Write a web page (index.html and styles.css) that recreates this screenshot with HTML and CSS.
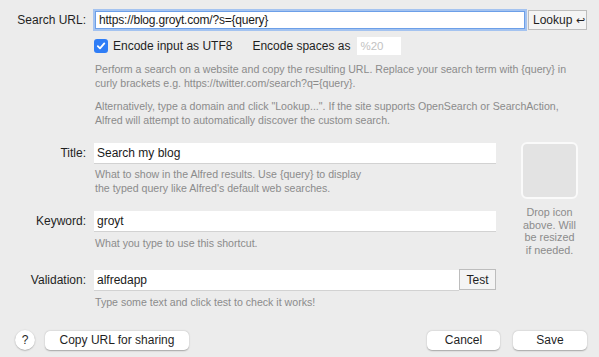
FILE: index.html
```html
<!DOCTYPE html>
<html>
<head>
    <title>Custom Search</title>
    <link rel="stylesheet" href="styles.css">
</head>
<body>
    <div class="dialog">
        <div class="row url-row">
            <label class="label" for="search-url">Search URL:</label>
            <input type="text" id="search-url" class="url-input" value="https://blog.groyt.com/?s={query}">
            <button class="lookup-btn">Lookup <span class="return">&#8617;</span></button>
        </div>

        <div class="check-row">
            <span class="checkbox">
                <svg width="10" height="10" viewBox="0 0 10 10"><path d="M1.8 5.2 L4 7.4 L8.3 2.4" fill="none" stroke="#fff" stroke-width="1.8" stroke-linecap="round" stroke-linejoin="round"/></svg>
            </span>
            <span class="check-label">Encode input as UTF8</span>
            <span class="spaces-label">Encode spaces as</span>
            <input type="text" class="spaces-input" placeholder="%20">
        </div>

        <p class="help first">Perform a search on a website and copy the resulting URL. Replace your search term with {query} in<br>curly brackets e.g. https://twitter.com/search?q={query}.</p>
        <p class="help second">Alternatively, type a domain and click "Lookup...". If the site supports OpenSearch or SearchAction,<br>Alfred will attempt to automatically discover the custom search.</p>

        <div class="main">
            <div class="fields">
                <div class="row field-row title-row">
                    <label class="label">Title:</label>
                    <input type="text" class="field" value="Search my blog">
                </div>
                <p class="help field-help">What to show in the Alfred results. Use {query} to display<br>the typed query like Alfred's default web searches.</p>

                <div class="row field-row keyword-row">
                    <label class="label">Keyword:</label>
                    <input type="text" class="field" value="groyt">
                </div>
                <p class="help field-help">What you type to use this shortcut.</p>

                <div class="row field-row validation-row">
                    <label class="label">Validation:</label>
                    <input type="text" class="field" value="alfredapp">
                    <button class="test-btn">Test</button>
                </div>
                <p class="help field-help">Type some text and click test to check it works!</p>
            </div>

            <div class="icon-col">
                <div class="icon-well"></div>
                <p class="drop-text">Drop icon<br>above. Will<br>be resized<br>if needed.</p>
            </div>
        </div>

        <div class="footer">
            <button class="help-btn">?</button>
            <button class="push-btn copy-btn">Copy URL for sharing</button>
            <div class="spacer"></div>
            <button class="push-btn cancel-btn">Cancel</button>
            <button class="push-btn save-btn">Save</button>
        </div>
    </div>
</body>
</html>
```

FILE: styles.css
```css
body {
    margin: 0;
    width: 599px;
    height: 357px;
    overflow: hidden;
    background-color: #ececec;
    font-family: "Liberation Sans", Arial, sans-serif;
    font-size: 12px;
    color: #1f1f1f;
}
.dialog {
    padding: 9px 12px 0 0;
}
.row {
    display: flex;
    align-items: center;
}
.label {
    width: 86px;
    flex-shrink: 0;
    text-align: right;
    margin-right: 8px;
}
input {
    font-family: inherit;
    font-size: 12px;
    color: #1a1a1a;
    outline: none;
}
button {
    font-family: inherit;
    font-size: 12px;
    color: #1f1f1f;
    cursor: pointer;
}

/* search url */
.url-row {
    height: 21px;
}
.url-row .label {
    margin-right: 9px;
}
.url-input {
    flex: 1;
    height: 18px;
    box-sizing: border-box;
    padding: 0 3px;
    border: 1px solid #6c9fe8;
    box-shadow: 0 0 0 2px #a4c3f0;
    background: #fff;
    letter-spacing: -0.2px;
}
.lookup-btn {
    margin-left: 3px;
    width: 59px;
    height: 20px;
    padding: 0 0 0 4px;
    text-align: left;
    white-space: nowrap;
    background: #f4f4f4;
    border: 1px solid #bdbdbd;
    border-radius: 0;
}
.return {
    font-size: 11px;
}

/* encode row */
.check-row {
    display: flex;
    align-items: center;
    height: 18px;
    margin: 7px 0 0 94px;
}
.checkbox {
    width: 14px;
    height: 14px;
    border-radius: 3px;
    background: #2f7df6;
    display: flex;
    align-items: center;
    justify-content: center;
}
.check-label {
    margin-left: 5px;
}
.spaces-label {
    margin-left: 20px;
}
.spaces-input {
    margin-left: 7px;
    width: 44px;
    height: 18px;
    box-sizing: border-box;
    border: none;
    padding: 0 3px;
    background: #fff;
    font-size: 11.5px;
}
.spaces-input::placeholder {
    color: #c2c2c2;
}

/* help texts */
.help {
    margin: 0 0 0 95px;
    font-size: 10.6px;
    line-height: 13.5px;
    color: #8b8b8b;
}
.help.first {
    margin-top: 8px;
}
.help.second {
    margin-top: 10px;
}
.field-help {
    margin-top: 5px;
}

/* fields */
.main {
    display: flex;
    margin-top: 16px;
}
.fields {
    width: 496px;
}
.field-row {
    height: 20px;
}
.keyword-row {
    margin-top: 16px;
}
.keyword-row + .field-help {
    margin-top: 6px;
}
.validation-row {
    margin-top: 19px;
}
.validation-row + .field-help {
    margin-top: 6px;
}
.field {
    flex: 1;
    height: 20px;
    box-sizing: border-box;
    border: none;
    padding: 0 3px;
    background: #fff;
    box-shadow: 0 1px 0 #d2d2d2;
}
.test-btn {
    width: 37px;
    height: 21px;
    padding: 0;
    background: #f4f4f4;
    border: 1px solid #bdbdbd;
    border-radius: 0;
}

/* icon */
.icon-col {
    margin-left: 25px;
    width: 57px;
}
.icon-well {
    margin-top: -1px;
    width: 57px;
    height: 57px;
    box-sizing: border-box;
    border: 2px solid #fafafa;
    border-radius: 6px;
    background: #e3e3e3;
}
.drop-text {
    margin: 7px 0 0 0;
    text-align: center;
    font-size: 10.8px;
    line-height: 12.5px;
    color: #8b8b8b;
    white-space: nowrap;
}

/* footer */
.footer {
    display: flex;
    align-items: center;
    margin-top: 21px;
    padding-left: 15px;
}
.help-btn {
    width: 20px;
    height: 20px;
    padding: 0;
    border: none;
    border-radius: 50%;
    background: #fff;
    box-shadow: 0 0.5px 1.5px rgba(0, 0, 0, 0.35);
}
.push-btn {
    height: 19px;
    padding: 0;
    border: none;
    border-radius: 5px;
    background: #fff;
    box-shadow: 0 0.5px 1.5px rgba(0, 0, 0, 0.3);
}
.copy-btn {
    margin-left: 10px;
    width: 144px;
}
.spacer {
    flex: 1;
}
.cancel-btn {
    width: 73px;
}
.save-btn {
    margin-left: 13px;
    width: 74px;
}
```
